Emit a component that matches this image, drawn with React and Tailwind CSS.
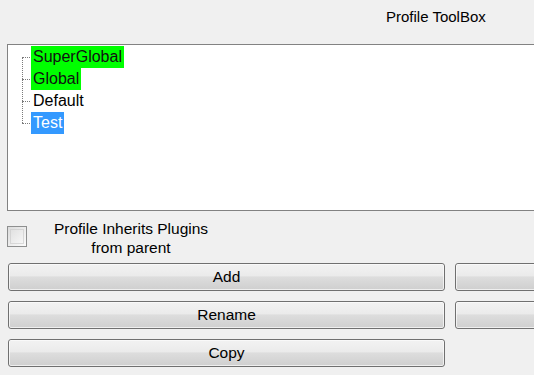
export default function App() {
  const font = { fontFamily: '"Liberation Sans", Arial, sans-serif' };
  const Btn = ({ children }) => (
    <div className="relative h-[28px] w-[437px] shrink-0 overflow-hidden rounded-[3px] border border-[#707070] bg-[linear-gradient(to_bottom,#f2f2f2_0%,#ebebeb_45%,#dddddd_50%,#cfcfcf_100%)] flex items-center justify-center text-[15.5px] text-black">
      <div className="pointer-events-none absolute inset-0 rounded-[2px] border border-[#fcfcfc]/70" />
      <span className="relative">{children}</span>
    </div>
  );
  const items = [
    { t: "SuperGlobal", cls: "bg-[#00ff00] text-[#111]" },
    { t: "Global", cls: "bg-[#00ff00] text-[#111]" },
    { t: "Default", cls: "text-black" },
    { t: "Test", cls: "bg-[#3399ff] text-white" },
  ];
  return (
    <div className="w-[534px] h-[375px] overflow-hidden bg-[#f0f0f0]" style={font}>
      <div className="h-[44px] pl-[386px] pt-[7px] text-[15px] text-black leading-[20px]">Profile ToolBox</div>
      <div className="ml-[7px] w-[560px] h-[167px] border border-[#828282] bg-white">
        <div className="relative pt-[1px] pl-[23px]">
          <div className="absolute left-[14px] top-[12px] h-[66px] border-l border-dotted border-[#7a7a7a]" />
          {items.map((it) => (
            <div key={it.t} className="relative h-[22px] flex items-center">
              <div className="absolute left-[-9px] top-[11px] w-[8px] border-t border-dotted border-[#7a7a7a]" />
              <span className={"h-[22px] pl-[2px] pr-[2px] text-[16px] leading-[22px] " + it.cls}>{it.t}</span>
            </div>
          ))}
        </div>
      </div>
      <div className="flex items-start mt-[15px] ml-[7px] h-[37px]">
        <div className="w-[20px] h-[21px] border border-[#8e8f8f] bg-[linear-gradient(135deg,#dcdcdc,#fbfbfb)] p-[2px]">
          <div className="w-full h-full border border-[#c8c8c8]/60" />
        </div>
        <div className="w-[208px] text-center text-[15.5px] leading-[19px] text-black -mt-[7px]">
          Profile Inherits Plugins<br />from parent
        </div>
      </div>
      <div className="ml-[8px] flex flex-col gap-[10px]">
        <div className="flex gap-[10px]">
          <Btn>Add</Btn>
          <Btn></Btn>
        </div>
        <div className="flex gap-[10px]">
          <Btn>Rename</Btn>
          <Btn></Btn>
        </div>
        <div className="flex gap-[10px]">
          <Btn>Copy</Btn>
        </div>
      </div>
    </div>
  );
}
